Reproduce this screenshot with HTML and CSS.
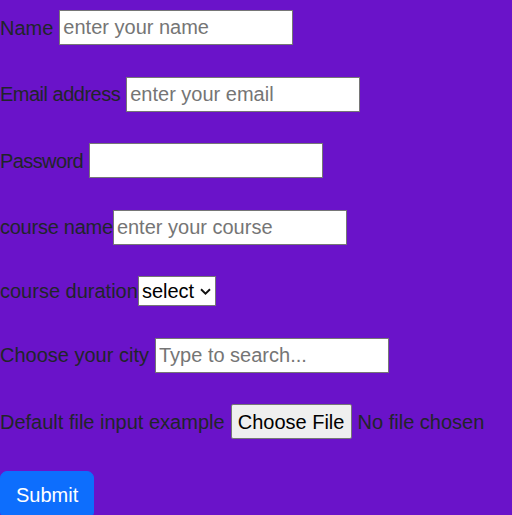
FILE: index.html
```html
<!DOCTYPE html>
<html lang="en">
<head>
<meta charset="utf-8">
<title>Form</title>
<link rel="stylesheet" href="styles.css">
</head>
<body>
<form class="form">
  <div class="row">
    <label class="label gap" for="name">Name</label>
    <input class="field" id="name" type="text" placeholder="enter your name">
  </div>
  <div class="row">
    <label class="label gap tight" for="email">Email address</label>
    <input class="field" id="email" type="email" placeholder="enter your email">
  </div>
  <div class="row">
    <label class="label gap tighter" for="pw">Password</label>
    <input class="field" id="pw" type="password">
  </div>
  <div class="row">
    <label class="label snug" for="course">course name</label>
    <input class="field" id="course" type="text" placeholder="enter your course">
  </div>
  <div class="row row-short">
    <label class="label" for="dur">course duration</label>
    <span class="select-wrap">
      <select class="select" id="dur">
        <option>select</option>
        <option>3 months</option>
        <option>6 months</option>
      </select>
      <svg class="chev" width="11" height="7" viewBox="0 0 11 7"><path d="M1 1.2 L5.5 5.6 L10 1.2" fill="none" stroke="#111" stroke-width="1.9"/></svg>
    </span>
  </div>
  <div class="row">
    <label class="label gap" for="city">Choose your city</label>
    <input class="field" id="city" type="text" placeholder="Type to search...">
  </div>
  <div class="row">
    <label class="label gap">Default file input example</label>
    <button type="button" class="file-btn">Choose File</button>
    <span class="file-none">No file chosen</span>
  </div>
  <div class="row">
    <button type="submit" class="submit">Submit</button>
  </div>
</form>
</body>
</html>
```
FILE: styles.css
```css
html, body {
  margin: 0;
  padding: 0;
}
body {
  background: #6a13c9;
  font-family: "Liberation Sans", Arial, sans-serif;
  font-size: 20px;
  line-height: 1.5;
  color: #212529;
  height: 515px;
  overflow: hidden;
}
.form {
  padding-top: 10px;
}
.row {
  display: flex;
  align-items: center;
  height: 35px;
  margin-bottom: 31.5px;
}
.row-short {
  height: 30px;
}
.label {
  white-space: nowrap;
}
.label.gap {
  margin-right: 6px;
}
.tight {
  letter-spacing: -0.5px;
}
.tighter {
  letter-spacing: -0.6px;
}
.snug {
  letter-spacing: -0.25px;
}
.field {
  box-sizing: border-box;
  width: 234px;
  height: 35px;
  margin: 0;
  padding: 0 3px;
  border: 1px solid #767676;
  border-radius: 0;
  background: #fff;
  font: inherit;
  color: #212529;
  outline: none;
}
.field::placeholder {
  color: #757575;
}
.select-wrap {
  position: relative;
  display: inline-block;
  height: 30px;
}
.select {
  -webkit-appearance: none;
  appearance: none;
  box-sizing: border-box;
  width: 78px;
  height: 30px;
  margin: 0;
  padding: 0 0 0 3px;
  border: 1px solid #767676;
  border-radius: 0;
  background: #fff;
  font: inherit;
  line-height: 26px;
  color: #000;
}
.chev {
  position: absolute;
  left: 62px;
  top: 12px;
  pointer-events: none;
}
.file-btn {
  box-sizing: border-box;
  height: 35px;
  width: 121px;
  margin: 0 6px 0 0;
  padding: 0;
  border: 1px solid #767676;
  border-radius: 2px;
  background: #efefef;
  font: inherit;
  color: #000;
}
.file-none {
  white-space: nowrap;
}
.submit {
  align-self: flex-start;
  box-sizing: border-box;
  height: 48px;
  padding: 0 15px;
  border: 1px solid #0d6efd;
  border-radius: 7px;
  background: #0d6efd;
  color: #fff;
  font: inherit;
}
```
